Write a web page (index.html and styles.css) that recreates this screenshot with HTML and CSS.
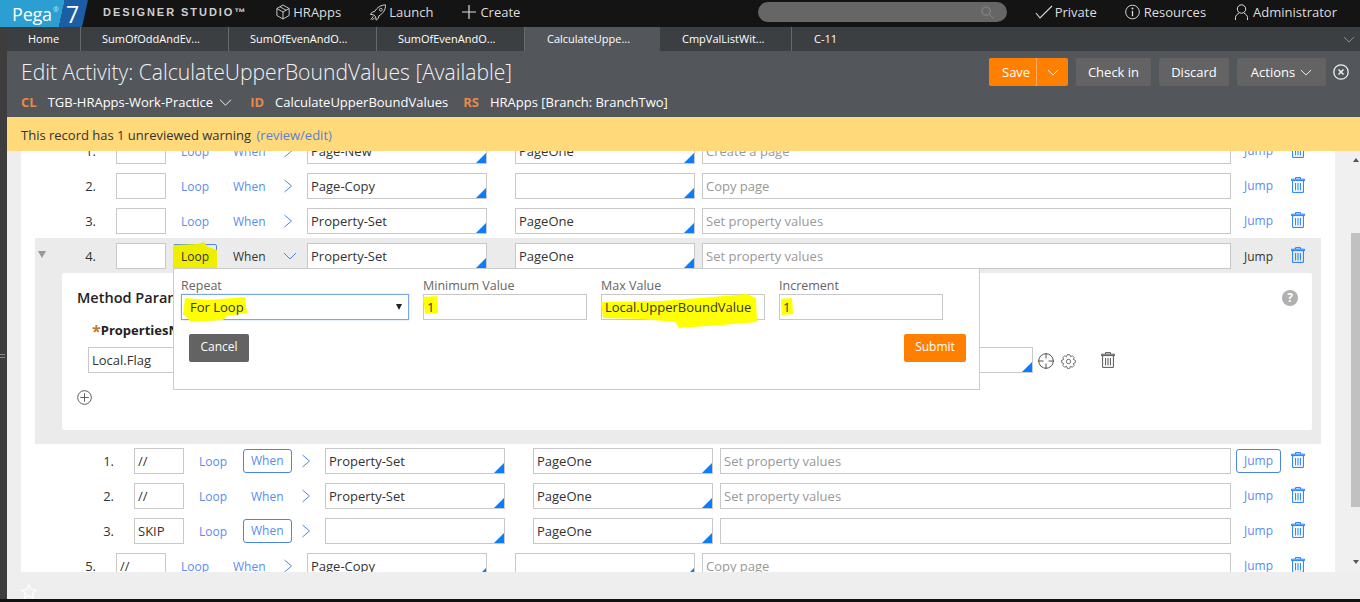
FILE: index.html
```html
<!DOCTYPE html>
<html lang="en">
<head>
<meta charset="utf-8">
<title>Edit Activity: CalculateUpperBoundValues</title>
<link rel="stylesheet" href="styles.css">
</head>
<body>
<svg class="defs" aria-hidden="true">
  <symbol id="trash" viewBox="0 0 14 16"><path d="M4.500 2V.6h5V2M.5 2.200h13v1.400H.5zM1.600 3.600V15.400h10.800V3.600M4.600 6v7.400M7 6v7.400M9.400 6v7.400" fill="none" stroke="currentColor" stroke-width="1"/></symbol>
  <symbol id="chev-r" viewBox="0 0 10 14"><path d="M1.500 1 8.500 7l-7 6" fill="none" stroke="currentColor" stroke-width="1"/></symbol>
  <symbol id="chev-d" viewBox="0 0 14 10"><path d="M1 2l6 6 6-6" fill="none" stroke="currentColor" stroke-width="1"/></symbol>
</svg>

<header class="top">
  <div class="logo"><span class="logo-pega">Pega<sup>®</sup></span><span class="logo-seven">7</span></div>
  <div class="brand">DESIGNER STUDIO™</div>
  <nav class="nav">
    <a class="nav-item"><svg class="nav-ico" viewBox="0 0 16 18"><path d="M8 1l7 4v8l-7 4-7-4V5zM1 5l7 4 7-4M8 9v8M4.500 3l7 4" fill="none" stroke="currentColor"/></svg>HRApps</a>
    <a class="nav-item nav-launch"><svg class="nav-ico-w" viewBox="0 0 18 18"><path d="M17 1c-5 0-9 2.500-11.500 7L3 8.500 1 11l3.500.5 2 2L7 17l2.500-2 .5-2.500C14.500 10 17 6 17 1zM12 4.500a1.500 1.500 0 1 0 .01 0zM4 13l-2.500 3.500M5.500 14.500 3 17" fill="none" stroke="currentColor"/></svg>Launch</a>
    <a class="nav-item nav-create"><svg class="nav-ico-p" viewBox="0 0 14 14"><path d="M7 0v14M0 7h14" fill="none" stroke="currentColor" stroke-width="1.200"/></svg>Create</a>
  </nav>
  <div class="top-right">
    <div class="search"><svg class="search-ico" viewBox="0 0 14 14"><circle cx="5.500" cy="5.500" r="4.500" fill="none" stroke="currentColor"/><path d="M9 9l4.500 4.500" stroke="currentColor"/></svg></div>
    <a class="nav-item nav-private"><svg class="nav-ico-c" viewBox="0 0 18 14"><path d="M1 8l4 5L17 1" fill="none" stroke="currentColor" stroke-width="1.100"/></svg>Private</a>
    <a class="nav-item nav-res"><svg class="nav-ico-i" viewBox="0 0 16 16"><circle cx="8" cy="8" r="7.300" fill="none" stroke="currentColor"/><path d="M8 6.800V12.500" stroke="currentColor" stroke-width="1.400"/><circle cx="8" cy="4.300" r="1" fill="currentColor"/></svg>Resources</a>
    <a class="nav-item nav-admin"><svg class="nav-ico-i" viewBox="0 0 14 16"><circle cx="7" cy="5" r="4.200" fill="none" stroke="currentColor"/><path d="M1 16v-2.500C1 11.500 3 10 4.500 9M13 16v-2.500C13 11.500 11 10 9.500 9" fill="none" stroke="currentColor"/></svg>Administrator</a>
  </div>
</header>

<div class="main">
  <div class="strip"><span class="grip"></span></div>
  <div class="workspace">
    <div class="tabs">
      <div class="tab tab-home">Home</div>
      <div class="tab tab-w">SumOfOddAndEv...</div>
      <div class="tab tab-w">SumOfEvenAndO...</div>
      <div class="tab tab-w">SumOfEvenAndO...</div>
      <div class="tab tab-active">CalculateUppe...</div>
      <div class="tab tab-cmp">CmpValListWit...</div>
      <div class="tab tab-last">C-11</div>
      <svg class="tabs-more"><use href="#chev-d"/></svg>
    </div>

    <div class="head">
      <div class="head-top">
        <h1 class="title">Edit Activity: CalculateUpperBoundValues [Available]</h1>
        <div class="head-actions">
          <div class="save"><span class="save-l">Save</span><span class="save-r"><svg class="chev-s"><use href="#chev-d"/></svg></span></div>
          <button class="hbtn btn-check">Check in</button>
          <button class="hbtn btn-discard">Discard</button>
          <button class="hbtn btn-actions">Actions<svg class="chev-s"><use href="#chev-d"/></svg></button>
          <svg class="close" viewBox="0 0 16 16"><circle cx="8" cy="8" r="7.200" fill="none" stroke="currentColor" stroke-width="1.300"/><path d="M5.500 5.500l5 5M10.500 5.500l-5 5" stroke="currentColor" stroke-width="1.500"/></svg>
        </div>
      </div>
      <div class="meta">
        <b class="key">CL</b><span class="val val-cl">TGB-HRApps-Work-Practice</span><svg class="chev-m"><use href="#chev-d"/></svg>
        <b class="key key-id">ID</b><span class="val val-id">CalculateUpperBoundValues</span>
        <b class="key key-rs">RS</b><span class="val val-rs">HRApps [Branch: BranchTwo]</span>
      </div>
    </div>

    <div class="warn">This record has 1 unreviewed warning&nbsp;<a class="warn-link">(review/edit)</a></div>

    <div class="body">
      <div class="gutter"></div>
      <div class="scroll">
        <div class="content">

          <div class="row">
            <div class="num">1.</div><div class="field step"></div>
            <div class="cell loop"><span>Loop</span></div><div class="cell when"><span>When</span></div>
            <div class="chev"><svg class="chev-r"><use href="#chev-r"/></svg></div>
            <div class="field method ac">Page-New</div><div class="field page ac">PageOne</div>
            <div class="field desc ph">Create a page</div>
            <div class="cell jump"><span>Jump</span></div><svg class="trash"><use href="#trash"/></svg>
          </div>
          <div class="row">
            <div class="num">2.</div><div class="field step"></div>
            <div class="cell loop"><span>Loop</span></div><div class="cell when"><span>When</span></div>
            <div class="chev"><svg class="chev-r"><use href="#chev-r"/></svg></div>
            <div class="field method ac">Page-Copy</div><div class="field page ac"></div>
            <div class="field desc ph">Copy page</div>
            <div class="cell jump"><span>Jump</span></div><svg class="trash"><use href="#trash"/></svg>
          </div>
          <div class="row">
            <div class="num">3.</div><div class="field step"></div>
            <div class="cell loop"><span>Loop</span></div><div class="cell when"><span>When</span></div>
            <div class="chev"><svg class="chev-r"><use href="#chev-r"/></svg></div>
            <div class="field method ac">Property-Set</div><div class="field page ac">PageOne</div>
            <div class="field desc ph">Set property values</div>
            <div class="cell jump"><span>Jump</span></div><svg class="trash"><use href="#trash"/></svg>
          </div>

          <div class="row row-open">
            <div class="num"><i class="caret"></i>4.</div><div class="field step"></div>
            <div class="cell loop loop-on"><svg class="hl hl-loop" viewBox="0 0 45 31" preserveAspectRatio="none"><path d="M0 3 25 2 31 0 35 5 44 8 44 27 28 28 26 31 3 30 0 26z"/></svg><span>Loop</span></div>
            <div class="cell when dark"><span>When</span></div>
            <div class="chev"><svg class="chev-dn"><use href="#chev-d"/></svg></div>
            <div class="field method ac">Property-Set</div><div class="field page ac">PageOne</div>
            <div class="field desc ph">Set property values</div>
            <div class="cell jump dark"><span>Jump</span></div><svg class="trash"><use href="#trash"/></svg>

            <div class="popup">
              <div class="pop-fields">
                <div class="pf pf-repeat">
                  <label class="pf-label">Repeat</label>
                  <div class="pf-input pf-select"><svg class="hl hl-for" viewBox="0 0 64 25" preserveAspectRatio="none"><path d="M2 1 26 3 62 0 64 16 44 19 40 23 8 25 4 20 0 18z"/></svg><span>For Loop</span><i class="sel-caret"></i></div>
                </div>
                <div class="pf">
                  <label class="pf-label">Minimum Value</label>
                  <div class="pf-input"><svg class="hl hl-min" viewBox="0 0 15 18" preserveAspectRatio="none"><path d="M0 1 14 0 15 17 2 18z"/></svg><span>1</span></div>
                </div>
                <div class="pf">
                  <label class="pf-label">Max Value</label>
                  <div class="pf-input"><svg class="hl hl-max" viewBox="0 0 156 34" preserveAspectRatio="none"><path d="M0 8 60 7 100 4 146 0 155 4 156 28 120 31 78 34 74 28 40 25 2 24z"/></svg><span>Local.UpperBoundValue</span></div>
                </div>
                <div class="pf">
                  <label class="pf-label">Increment</label>
                  <div class="pf-input"><svg class="hl hl-inc" viewBox="0 0 13 17" preserveAspectRatio="none"><path d="M1 1 12 0 13 16 2 17z"/></svg><span>1</span></div>
                </div>
              </div>
              <div class="pop-actions">
                <button class="pbtn cancel">Cancel</button>
                <button class="pbtn submit">Submit</button>
              </div>
            </div>
          </div>

          <div class="detail">
            <div class="card">
              <div class="card-head">
                <h2 class="card-title">Method Parameters</h2>
                <span class="help">?</span>
              </div>
              <div class="param-label"><span class="star">*</span>PropertiesName</div>
              <div class="param-row">
                <div class="field param-a">Local.Flag</div>
                <div class="field param-b ac"></div>
                <svg class="target" viewBox="0 0 16 16"><circle cx="8" cy="8" r="7.300" fill="none" stroke="currentColor"/><path d="M8 0v5.500M8 10.500V16M0 8h5.500M10.500 8H16" stroke="currentColor"/></svg>
                <svg class="gear" viewBox="0 0 16 16"><path d="M15.290 6.720V9.280L13.170 10.140 14.060 12.240 12.240 14.060 10.140 13.170 9.280 15.290H6.720L5.860 13.170 3.760 14.060 1.940 12.240 2.830 10.140.71 9.280V6.720L2.830 5.860 1.940 3.760 3.760 1.940 5.860 2.830 6.720.71H9.280L10.140 2.830 12.240 1.940 14.060 3.760 13.170 5.860z" fill="none" stroke="currentColor" stroke-width=".9"/><circle cx="8" cy="8" r="2.300" fill="none" stroke="currentColor" stroke-width=".9"/></svg>
                <svg class="trash-g"><use href="#trash"/></svg>
              </div>
              <svg class="add" viewBox="0 0 16 16"><circle cx="8" cy="8" r="7.300" fill="none" stroke="currentColor"/><path d="M8 3.500v9M3.500 8h9" stroke="currentColor"/></svg>
            </div>
          </div>

          <div class="nested">
            <div class="row">
              <div class="num">1.</div><div class="field step">//</div>
              <div class="cell loop"><span>Loop</span></div><div class="cell when boxed"><span>When</span></div>
              <div class="chev"><svg class="chev-r"><use href="#chev-r"/></svg></div>
              <div class="field method ac">Property-Set</div><div class="field page ac">PageOne</div>
              <div class="field desc ph">Set property values</div>
              <div class="cell jump boxed"><span>Jump</span></div><svg class="trash"><use href="#trash"/></svg>
            </div>
            <div class="row">
              <div class="num">2.</div><div class="field step">//</div>
              <div class="cell loop"><span>Loop</span></div><div class="cell when"><span>When</span></div>
              <div class="chev"><svg class="chev-r"><use href="#chev-r"/></svg></div>
              <div class="field method ac">Property-Set</div><div class="field page ac">PageOne</div>
              <div class="field desc ph">Set property values</div>
              <div class="cell jump"><span>Jump</span></div><svg class="trash"><use href="#trash"/></svg>
            </div>
            <div class="row">
              <div class="num">3.</div><div class="field step">SKIP</div>
              <div class="cell loop"><span>Loop</span></div><div class="cell when boxed"><span>When</span></div>
              <div class="chev"><svg class="chev-r"><use href="#chev-r"/></svg></div>
              <div class="field method ac"></div><div class="field page ac">PageOne</div>
              <div class="field desc"></div>
              <div class="cell jump"><span>Jump</span></div><svg class="trash"><use href="#trash"/></svg>
            </div>
          </div>

          <div class="row">
            <div class="num">5.</div><div class="field step">//</div>
            <div class="cell loop"><span>Loop</span></div><div class="cell when"><span>When</span></div>
            <div class="chev"><svg class="chev-r"><use href="#chev-r"/></svg></div>
            <div class="field method ac">Page-Copy</div><div class="field page ac"></div>
            <div class="field desc ph">Copy page</div>
            <div class="cell jump"><span>Jump</span></div><svg class="trash"><use href="#trash"/></svg>
          </div>

        </div>
      </div>
      <div class="sbar">
        <i class="sb-up"></i>
        <span class="sb-thumb"></span>
        <i class="sb-down"></i>
      </div>
    </div>

    <div class="foot"><svg class="fav" viewBox="0 0 18 17"><path d="M9 1l2.400 5.300 5.600.6-4.200 3.800 1.200 5.600L9 13.500l-5 2.800 1.200-5.600L1 6.900l5.600-.6z" fill="none" stroke="currentColor" stroke-width="1.200"/></svg></div>
  </div>
</div>
<div class="baseline"></div>
</body>
</html>
```

FILE: styles.css
```css
* { box-sizing: border-box; }
html, body { margin: 0; padding: 0; }
body {
  width: 1360px;
  height: 602px;
  overflow: hidden;
  display: flex;
  flex-direction: column;
  font: 13px/18px "Open Sans", "Liberation Sans", sans-serif;
  color: #333;
  background: #000;
}
.defs { position: absolute; width: 0; height: 0; }
button { font: inherit; border: 0; padding: 0; }
h1, h2 { margin: 0; font-weight: normal; }

/* top bar */
.top {
  flex: 0 0 27px;
  display: flex;
  align-items: center;
  background: #141414;
  color: #ddd;
}
.logo {
  width: 88px;
  height: 27px;
  display: flex;
  align-items: center;
  color: #fff;
  background: linear-gradient(102.5deg, #2c9fd2 63px, #1c5ea3 63px);
  clip-path: polygon(0 0, 88px 0, 82px 27px, 0 27px);
}
.logo-pega { margin-left: 12px; width: 53px; font-size: 18px; letter-spacing: -.2px; }
.logo-pega sup { font-size: 7px; line-height: 0; vertical-align: 9px; margin-left: 1px; color: #bfe3f2; }
.logo-seven { font-size: 23px; margin-left: 1px; }
.brand {
  margin-left: 15px;
  margin-top: -3px;
  font: bold 11px/18px "Liberation Sans", sans-serif;
  letter-spacing: 1.95px;
  color: #cfcfcf;
  white-space: nowrap;
}
.nav { display: flex; margin-left: 29px; margin-top: -3px; }
.nav-item { display: flex; align-items: center; white-space: nowrap; color: #ddd; }
.nav-launch { margin-left: 28px; }
.nav-create { margin-left: 29px; }
.nav-ico { width: 14px; height: 16px; margin-right: 3px; }
.nav-ico-w { width: 18px; height: 17px; margin-right: 2px; }
.nav-ico-p { width: 14px; height: 14px; margin-right: 4px; }
.nav-ico-c { width: 18px; height: 14px; margin-right: 2px; }
.nav-ico-i { width: 15px; height: 16px; margin-right: 4px; }
.top-right { display: flex; align-items: center; margin-left: auto; margin-top: -3px; padding-right: 23px; }
.search {
  width: 249px;
  height: 20px;
  margin-right: 28px;
  padding-right: 13px;
  border-radius: 10px;
  background: #666;
  color: #8c8c8c;
  display: flex;
  align-items: center;
  justify-content: flex-end;
}
.search-ico { width: 13px; height: 13px; }
.nav-res { margin-left: 28px; }
.nav-admin { margin-left: 28px; }

/* shell */
.main { flex: 1; display: flex; min-height: 0; }
.strip { flex: 0 0 7px; background: #3d3d3d; display: flex; align-items: center; }
.grip { width: 5px; height: 4px; margin-top: 85px; border-top: 1px solid #888; border-bottom: 1px solid #888; }
.workspace { flex: 1; min-width: 0; display: flex; flex-direction: column; }
.baseline { flex: 0 0 3px; background: #111; }

/* tabs */
.tabs { flex: 0 0 24px; display: flex; background: #3b3f41; color: #fff; font-size: 11px; line-height: 24px; position: relative; }
.tab { white-space: nowrap; border-right: 1px solid #666a6c; }
.tab-home { width: 74px; padding-left: 21px; line-height: 23px; }
.tab-w { width: 148px; padding-left: 21px; }
.tab-active { width: 135px; padding-left: 22px; background: #53565b; border-right: 0; }
.tab-cmp { width: 132px; padding-left: 22px; }
.tab-last { padding-left: 22px; border: 0; }
.tabs-more { position: absolute; right: 5px; top: 8px; width: 12px; height: 9px; color: #9a9d9f; }

/* header */
.head { flex: 0 0 66px; background: #53565b; padding: 7px 11px 0 14px; color: #fff; }
.head-top { display: flex; align-items: flex-start; justify-content: space-between; height: 28px; }
.title { font-size: 21.100px; font-weight: 300; line-height: 29px; margin-top: -1px; color: #f2f3f4; white-space: nowrap; }
.head-actions { display: flex; align-items: center; height: 28px; }
.save { display: flex; width: 79px; height: 28px; background: #ff8000; border-radius: 2px; line-height: 28px; }
.save-l { width: 48px; padding-left: 13px; border-right: 1px solid #ffb060; }
.save-r { flex: 1; display: flex; align-items: center; justify-content: center; }
.chev-s { width: 12px; height: 9px; }
.hbtn { height: 28px; margin-left: 8px; background: #636363; color: #fff; border-radius: 2px; display: flex; align-items: center; justify-content: center; gap: 5px; }
.btn-check { width: 75px; }
.btn-discard { width: 70px; }
.btn-actions { width: 89px; }
.close { width: 16px; height: 16px; margin-left: 7px; color: #f0f0f0; }
.meta { display: flex; align-items: center; height: 18px; margin-top: 7px; white-space: nowrap; }
.key { color: #e8884a; font-weight: 700; }
.val { color: #fff; margin-left: 12px; }
.val-cl { margin-left: 11px; }
.chev-m { width: 13px; height: 9px; margin-left: 6px; color: #fff; }
.key-id { margin-left: 18px; }
.key-rs { margin-left: 15px; }
.val-id { margin-left: 11px; }
.val-rs { margin-left: 11px; }

/* warning */
.warn { flex: 0 0 34px; background: #ffd97a; padding: 9px 14px 0; line-height: 18px; color: #333; }
.warn-link { color: #5a7fd8; margin-left: 2px; }

/* body */
.body { flex: 1; min-height: 0; display: flex; background: #eee; }
.gutter { flex: 0 0 14px; }
.scroll { flex: 0 0 1314px; overflow: hidden; background: #fff; }
.content { margin-top: -18px; }
.sbar { flex: 1; position: relative; background: #f0f0f0; display: flex; justify-content: flex-end; }
.sb-thumb { width: 9px; height: 274px; margin-top: 82px; background: #c1c1c1; }
.sb-up, .sb-down { position: absolute; right: 1px; width: 0; height: 0; border-left: 3px solid transparent; border-right: 3px solid transparent; }
.sb-up { top: 7px; border-bottom: 4px solid #555; }
.sb-down { bottom: 8px; border-top: 4px solid #555; }
.foot { flex: 0 0 27px; background: #eee; padding: 12px 0 0 14px; }
.fav { display: block; width: 16px; height: 15px; color: #fff; }

/* rows */
.row { display: flex; align-items: flex-start; height: 35px; margin: 0 14px; padding: 5px 16px 0 0; position: relative; }
.row-open { background: #ebebeb; }
.num { width: 61px; height: 26px; line-height: 26px; text-align: right; color: #333; display: flex; justify-content: flex-end; position: relative; }
.caret { position: absolute; left: 3px; top: 8px; width: 0; height: 0; border-left: 4px solid transparent; border-right: 4px solid transparent; border-top: 7px solid #999; }
.field {
  height: 26px;
  line-height: 24px;
  padding: 0 3px;
  background: #fff;
  border: 1px solid #c8c8c8;
  color: #333;
  position: relative;
  white-space: nowrap;
  overflow: hidden;
}
.ph { color: #999; }
.ac::after {
  content: "";
  position: absolute;
  right: 0;
  bottom: 0;
  width: 10px;
  height: 10px;
  background: #0a7cff;
  clip-path: polygon(100% 0, 100% 100%, 0 100%);
}
.step { width: 50px; margin-left: 20px; }
.cell { height: 26px; font-size: 12px; line-height: 28px; color: #5b8def; text-align: left; padding-left: 8px; position: relative; }
.cell span { position: relative; z-index: 1; }
.loop { width: 44px; margin-left: 7px; }
.when { width: 49px; margin-left: 8px; }
.jump { width: 45px; margin-left: 5px; line-height: 26px; }
.dark { color: #333; }
.jump.dark { line-height: 28px; }
.boxed { height: 24px; line-height: 22px; margin-top: 1px; padding-left: 7px; border: 1px solid #4a86e8; border-radius: 3px; background: #fff; }
.jump.boxed { line-height: 22px; }
.chev { width: 33px; height: 26px; display: flex; align-items: center; padding-left: 9px; }
.chev-r { width: 10px; height: 14px; color: #4a86e8; margin-top: -1px; }
.chev-dn { width: 14px; height: 10px; color: #4a86e8; margin-top: -1px; }
.method { width: 180px; }
.page { width: 180px; margin-left: 28px; }
.desc { flex: 1; margin-left: 7px; }
.trash { flex: 0 0 14px; width: 14px; height: 16px; margin: 4px 0 0 10px; color: #1c7cff; }
.nested { padding-left: 18px; margin: -1px 0 0; }
.nested .row { margin-left: 14px; }
.nested .num { width: 61px; }
.loop-on { color: #333; border: 1px solid #4a86e8; border-radius: 2px; height: 24px; line-height: 24px; margin-top: 1px; padding-left: 7px; }

/* highlight marker strokes */
.hl { position: absolute; fill: #ff0; z-index: 0; }
.hl-loop { left: -1px; top: -3px; width: 45px; height: 31px; fill: #eeee00; }
.hl-for { left: 1px; top: 2px; width: 64px; height: 25px; }
.hl-min { left: -1px; top: 1px; width: 15px; height: 18px; }
.hl-max { left: -1px; top: -1px; width: 156px; height: 34px; }
.hl-inc { left: 0; top: 3px; width: 13px; height: 17px; }

/* popup */
.popup {
  position: absolute;
  left: 138px;
  top: 30px;
  z-index: 5;
  width: 807px;
  height: 122px;
  padding: 9px 13px 0 7px;
  background: #fff;
  border: 1px solid #ccc;
}
.pop-fields { display: flex; gap: 14px; }
.pf { width: 164px; }
.pf-repeat { width: 228px; }
.pf-label { display: block; height: 16px; font-size: 12.500px; line-height: 16px; color: #666; white-space: nowrap; }
.pf-input { height: 26px; line-height: 24px; padding: 0 3px; border: 1px solid #c8c8c8; position: relative; white-space: nowrap; color: #333; }
.pf-input span { position: relative; }
.pf-select { border: 1px solid #7aa7e8; box-shadow: 0 0 1px #7aa7e8; padding-left: 8px; }
.sel-caret { position: absolute; right: 6px; top: 9px; width: 0; height: 0; border-left: 3.500px solid transparent; border-right: 3.500px solid transparent; border-top: 6px solid #222; }
.pop-actions { display: flex; justify-content: space-between; margin-top: 14px; padding-left: 8px; }
.pbtn { height: 28px; padding-bottom: 2px; font-size: 12px; color: #fff; border-radius: 2px; }
.cancel { width: 60px; background: #636363; }
.submit { width: 62px; background: #ff8000; }

/* method parameters */
.detail { margin: 0 14px; padding: 0 9px 14px 27px; background: #ebebeb; }
.card { height: 157px; padding: 15px 14px 0 15px; background: #fff; border-radius: 2px; }
.card-head { display: flex; justify-content: space-between; align-items: center; height: 20px; }
.card-title { font-size: 14.500px; font-weight: 600; color: #222; white-space: nowrap; }
.help { width: 16px; height: 16px; border-radius: 50%; background: #b0b0b0; color: #fff; font-size: 12px; font-weight: 700; line-height: 16px; text-align: center; }
.param-label { margin: 13px 0 0 15px; font-weight: 700; color: #222; white-space: nowrap; height: 18px; }
.star { color: #c07a2e; font-size: 16px; line-height: 0; vertical-align: -2px; }
.param-row { display: flex; align-items: center; margin: 8px 0 0 11px; }
.param-a { width: 400px; }
.param-b { width: 525px; margin-left: 20px; }
.target { width: 16px; height: 16px; margin: 2px 0 0 5px; color: #555; }
.gear { width: 15px; height: 15px; margin: 2px 0 0 7px; color: #555; }
.trash-g { width: 14px; height: 16px; margin-left: 25px; color: #555; }
.add { display: block; width: 15px; height: 15px; margin-top: 17px; color: #555; }
```
